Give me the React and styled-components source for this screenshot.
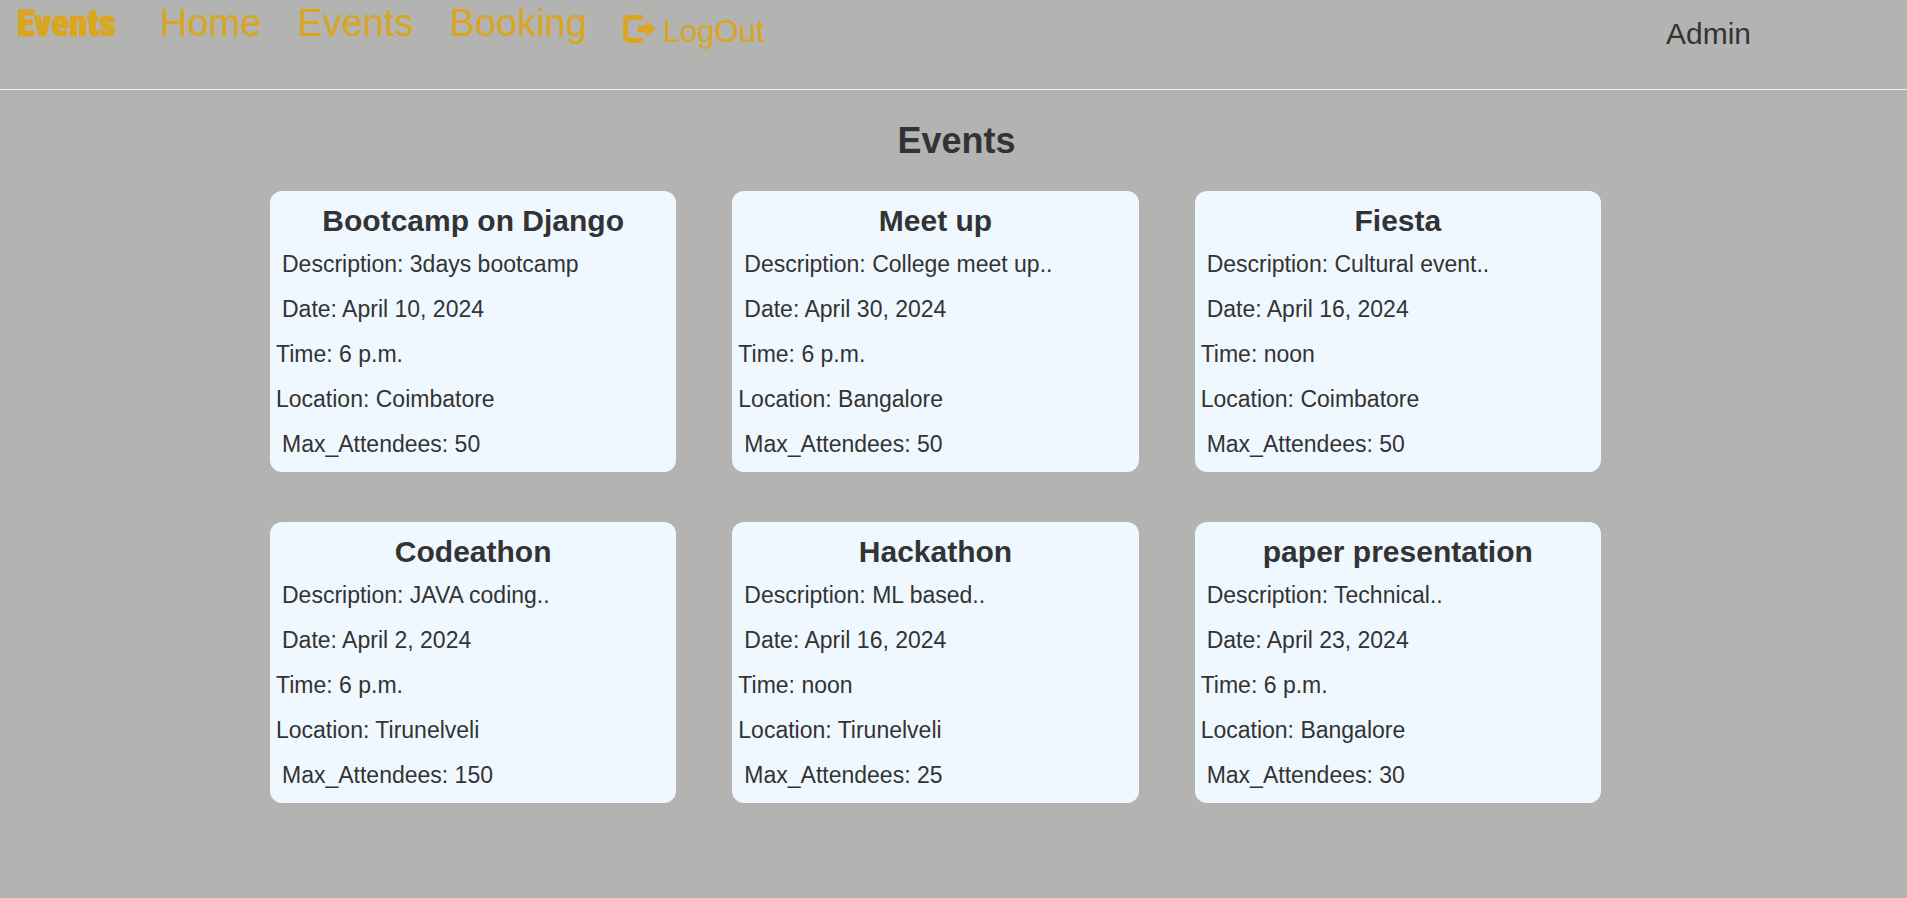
import React from 'react';
import styled, { createGlobalStyle } from 'styled-components';

const GlobalStyle = createGlobalStyle`
  * { box-sizing: border-box; }
  html { min-height: 100%; background: #b3b3b1; }
  body {
    margin: 0;
    color: #333;
    font-family: Arial, "Liberation Sans", sans-serif;
    font-size: 23px;
  }
`;

const Header = styled.header`
  display: flex;
  justify-content: space-between;
  align-items: flex-start;
  height: 90px;
  padding: 0 156px 0 17px;
  border-bottom: 1px solid #eee;
`;

const Nav = styled.nav`
  display: flex;
  align-items: flex-start;
  gap: 36px;
`;

const Brand = styled.a`
  width: 107px;
  color: goldenrod;
  font-family: Impact, "Roboto Condensed", "Open Sans Condensed", Lato, sans-serif;
  font-size: 37px;
  font-weight: 900;
  line-height: 48px;
  text-decoration: none;
  -webkit-text-stroke: 1px goldenrod;
`;

const NavLink = styled.a`
  color: goldenrod;
  font-size: 38px;
  line-height: 46px;
  text-decoration: none;
`;

const LogOutLink = styled.a`
  display: flex;
  align-items: center;
  gap: 7px;
  padding-top: 9px;
  color: goldenrod;
  font-size: 31px;
  line-height: 46px;
  text-decoration: none;

  svg {
    margin-bottom: 6px;
  }
`;

const User = styled.span`
  padding-top: 11px;
  font-size: 30px;
  line-height: 46px;
`;

const Main = styled.main`
  padding-bottom: 48px;
`;

const PageTitle = styled.h1`
  margin: 0;
  padding: 30px 0 29px 6px;
  font-size: 36px;
  line-height: 42px;
  text-align: center;
`;

const EventGrid = styled.div`
  display: grid;
  grid-template-columns: repeat(3, 1fr);
  gap: 50px 56px;
  padding: 0 306px 0 270px;
`;

const Card = styled.article`
  padding: 9px 6px 5px;
  border-radius: 12px;
  background: aliceblue;
`;

const CardTitle = styled.h2`
  margin: 0;
  font-size: 30px;
  line-height: 42px;
  text-align: center;
`;

const Detail = styled.p`
  margin: 0;
  padding-left: ${(p) => (p.$indent ? '6px' : '0')};
  line-height: 45px;
`;

const events = [
  { name: 'Bootcamp on Django', description: '3days bootcamp', date: 'April 10, 2024', time: '6 p.m.', location: 'Coimbatore', max: 50 },
  { name: 'Meet up', description: 'College meet up..', date: 'April 30, 2024', time: '6 p.m.', location: 'Bangalore', max: 50 },
  { name: 'Fiesta', description: 'Cultural event..', date: 'April 16, 2024', time: 'noon', location: 'Coimbatore', max: 50 },
  { name: 'Codeathon', description: 'JAVA coding..', date: 'April 2, 2024', time: '6 p.m.', location: 'Tirunelveli', max: 150 },
  { name: 'Hackathon', description: 'ML based..', date: 'April 16, 2024', time: 'noon', location: 'Tirunelveli', max: 25 },
  { name: 'paper presentation', description: 'Technical..', date: 'April 23, 2024', time: '6 p.m.', location: 'Bangalore', max: 30 },
];

const LogOutIcon = () => (
  <svg width="33" height="28" viewBox="0 0 33 28" fill="currentColor" aria-hidden="true">
    <path d="M20 0H7Q0 0 0 7V21Q0 28 7 28H20V23H8Q5 23 5 20V8Q5 5 8 5H20Z" />
    <path d="M15 10.500H23V5.500L33 14L23 22.500V17.500H15Z" />
  </svg>
);

const EventCard = ({ event }) => (
  <Card>
    <CardTitle>{event.name}</CardTitle>
    <Detail $indent>Description: {event.description}</Detail>
    <Detail $indent>Date: {event.date}</Detail>
    <Detail>Time: {event.time}</Detail>
    <Detail>Location: {event.location}</Detail>
    <Detail $indent>Max_Attendees: {event.max}</Detail>
  </Card>
);

export default function App() {
  return (
    <>
      <GlobalStyle />
      <Header>
        <Nav>
          <Brand href="#">Events</Brand>
          <NavLink href="#home">Home</NavLink>
          <NavLink href="#events">Events</NavLink>
          <NavLink href="#booking">Booking</NavLink>
          <LogOutLink href="#logout">
            <LogOutIcon />
            LogOut
          </LogOutLink>
        </Nav>
        <User>Admin</User>
      </Header>
      <Main>
        <PageTitle>Events</PageTitle>
        <EventGrid>
          {events.map((event) => (
            <EventCard key={event.name} event={event} />
          ))}
        </EventGrid>
      </Main>
    </>
  );
}
